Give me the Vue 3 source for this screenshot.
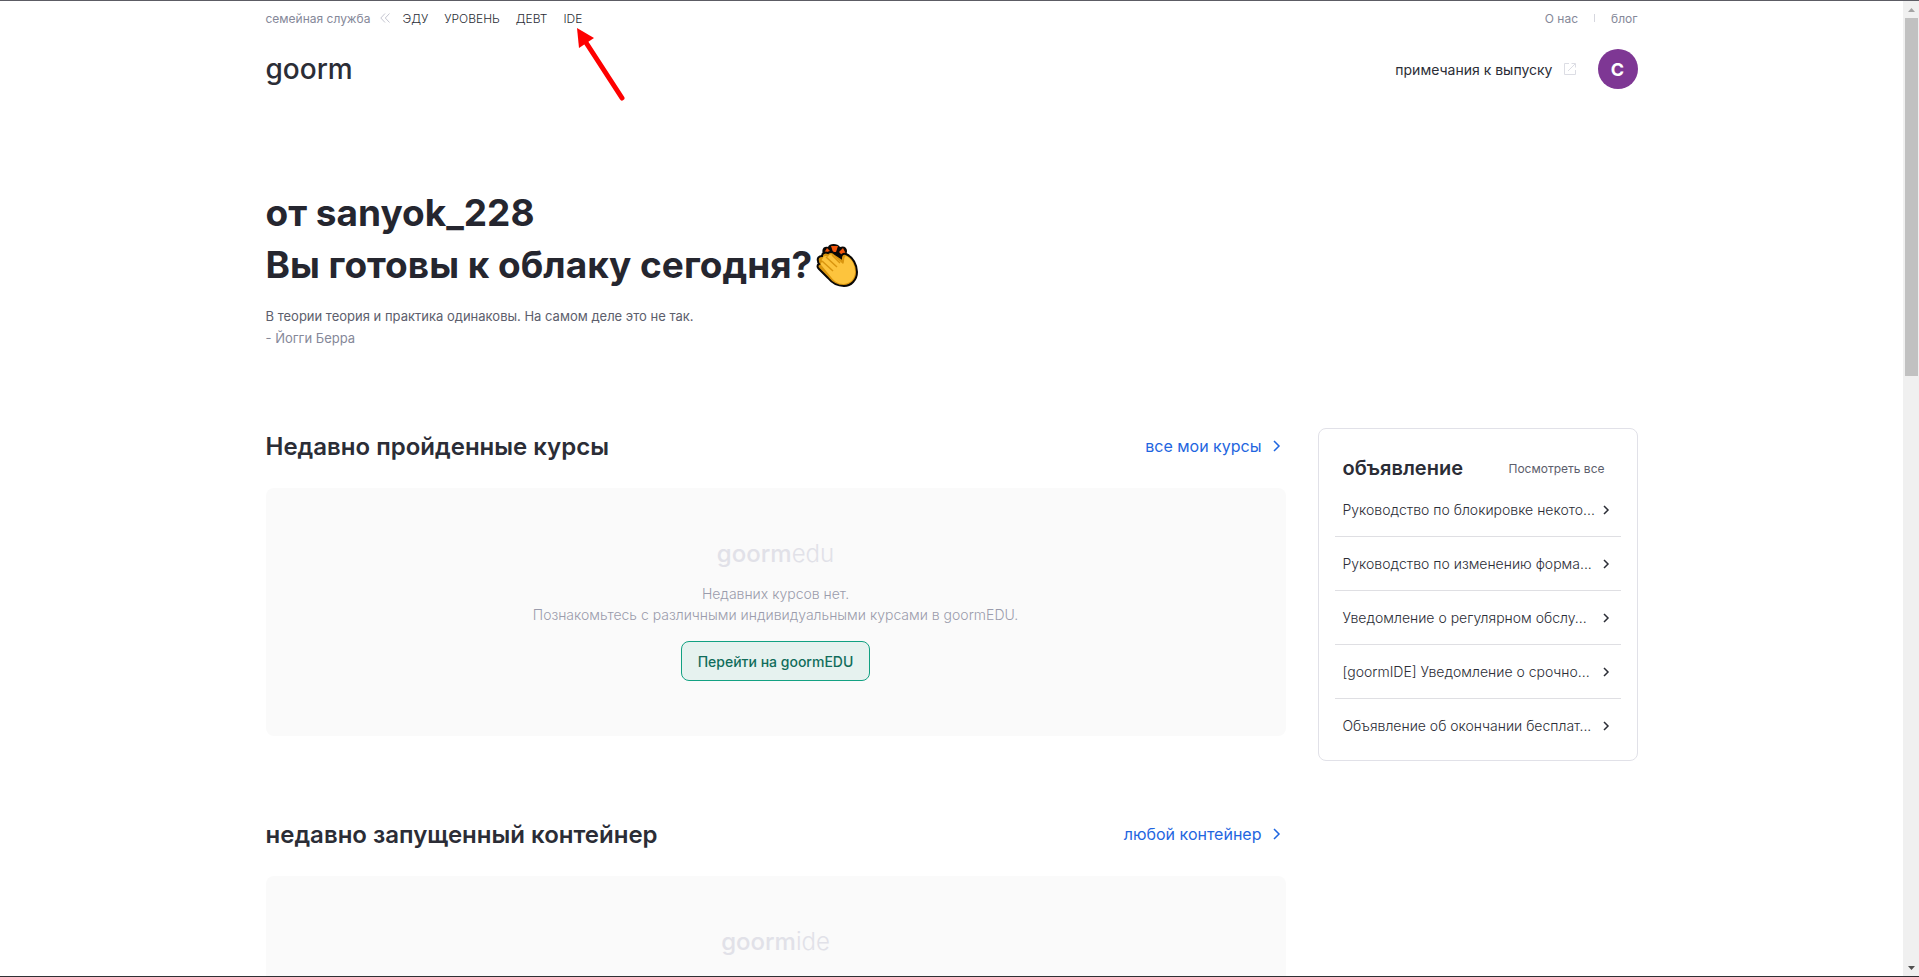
<template>
  <div class="page">
    <div class="container">
      <nav class="family">
        <div class="family-links">
          <span class="muted">семейная служба</span>
          <svg class="double-chevron" viewBox="0 0 10 10" aria-hidden="true">
            <path d="M5 .5 .8 5 5 9.500M9.500 .5 5.300 5l4.200 4.500" />
          </svg>
          <a v-for="item in services" :key="item" href="#" class="service">
            {{ item }}
            <svg v-if="item === 'IDE'" class="arrow" viewBox="0 0 50 76" aria-hidden="true">
              <path class="arrow-line" d="M10 14 47 71" />
              <path class="arrow-head" d="M2 1 19 11 4 21z" />
            </svg>
          </a>
        </div>
        <div class="about-links">
          <a href="#">О нас</a>
          <span class="divider"></span>
          <a href="#">блог</a>
        </div>
      </nav>

      <header class="header">
        <a href="#" class="logo">goorm</a>
        <div class="header-right">
          <a href="#" class="release">
            примечания к выпуску
            <svg viewBox="0 0 12 12" aria-hidden="true">
              <path d="M5 .5H.5v11h11V7M4 8l7-7M7.500 .5h4v4" />
            </svg>
          </a>
          <button type="button" class="avatar">C</button>
        </div>
      </header>

      <section class="hero">
        <h1>
          от sanyok_228<br />
          <span class="hero-line">Вы готовы к облаку сегодня?<svg class="clap" viewBox="0 0 42 44" aria-hidden="true">
            <path class="clap-edge" d="M7 11C5 6 8 3 12 4c1-4 10-4 12 0 5-2 9 2 6 8l-4 6H12z" />
            <path class="clap-spark" d="m8 10 3-5 4 4-3 3zM15 3h7l-2 6h-3zM23 9l4-4 3 6-4 1z" />
            <path class="clap-back" d="M2 18c-1-3 1-5 4-5 0-3 3-4 6-3 2-2 5-1 7 1l6 4c0-3 2-5 5-4 7 3 11 11 11 18 0 8-6 14-13 14-7 0-12-3-16-8L3 26c-2-2-2-4 0-5-1-1-1-2-1-3z" />
            <path class="clap-front" d="M7 15c0-2 3-3 5-1 1-3 4-3 6-1l9 8c2-2 0-6 3-8 6 3 9 9 9 16 0 7-5 12-12 12-5 0-9-3-12-7L6 23c-2-2-1-4 1-4-2-2-1-3 0-4z" />
            <path class="clap-lines" d="m6 18 11 10M10 14l11 10M16 12l8 8" />
          </svg></span>
        </h1>
        <p class="quote">В теории теория и практика одинаковы. На самом деле это не так.</p>
        <p class="quote author">- Йогги Берра</p>
      </section>

      <main class="content">
        <div class="sections">
          <section v-for="s in sections" :key="s.title" class="section">
            <div class="section-head">
              <h2>{{ s.title }}</h2>
              <a href="#" class="more">
                {{ s.more }}
                <svg class="chevron" viewBox="0 0 8 12" aria-hidden="true"><path d="m1 1 5 5-5 5" /></svg>
              </a>
            </div>
            <div class="empty">
              <div class="empty-logo">goorm<span>{{ s.product }}</span></div>
              <template v-if="s.empty">
                <p>{{ s.empty }}<br />{{ s.hint }}</p>
                <button type="button" class="go">{{ s.button }}</button>
              </template>
            </div>
          </section>
        </div>

        <aside class="notice">
          <div class="notice-head">
            <h3>объявление</h3>
            <a href="#">Посмотреть все</a>
          </div>
          <ul>
            <li v-for="n in notices" :key="n">
              <a href="#">
                <span>{{ n }}</span>
                <svg class="chevron" viewBox="0 0 8 12" aria-hidden="true"><path d="m2 2 4 4-4 4" /></svg>
              </a>
            </li>
          </ul>
        </aside>
      </main>
    </div>

    <div class="scrollbar" aria-hidden="true">
      <svg viewBox="0 0 7 4"><path class="up" d="M0 4 3.500 0 7 4z" /></svg>
      <div class="thumb"></div>
      <svg viewBox="0 0 7 4"><path class="down" d="M0 0h7L3.500 4z" /></svg>
    </div>
  </div>
</template>

<script setup>
const services = ['ЭДУ', 'УРОВЕНЬ', 'ДЕВТ', 'IDE']

const sections = [
  {
    title: 'Недавно пройденные курсы',
    more: 'все мои курсы',
    product: 'edu',
    empty: 'Недавних курсов нет.',
    hint: 'Познакомьтесь с различными индивидуальными курсами в goormEDU.',
    button: 'Перейти на goormEDU'
  },
  {
    title: 'недавно запущенный контейнер',
    more: 'любой контейнер',
    product: 'ide'
  }
]

const notices = [
  'Руководство по блокировке некото...',
  'Руководство по изменению форма...',
  'Уведомление о регулярном обслу...',
  '[goormIDE] Уведомление о срочно...',
  'Объявление об окончании бесплат...'
]
</script>

<style>
body {
  margin: 0;
  background: #fff;
}
</style>

<style scoped>
.page {
  position: relative;
  box-sizing: border-box;
  height: 100vh;
  overflow: hidden;
  padding-right: 16px;
  border-top: 1px solid #5c5c64;
  border-bottom: 1px solid #303034;
  font-family: Inter, "Liberation Sans", sans-serif;
  font-size: 14px;
  color: #2b2d36;
}

.container {
  max-width: 1372px;
  margin: 0 auto;
}

a {
  color: inherit;
  text-decoration: none;
}

button {
  font-family: inherit;
  cursor: pointer;
}

h1,
h2,
h3,
p,
ul {
  margin: 0;
  padding: 0;
}

svg {
  flex: none;
  fill: none;
}

/* верхняя строка */
.family {
  display: flex;
  justify-content: space-between;
  height: 34px;
  font-size: 12px;
}

.family-links,
.about-links {
  display: flex;
  align-items: center;
}

.family-links {
  gap: 16px;
  font-weight: 300;
}

.muted,
.about-links {
  color: #858899;
}

.muted {
  font-weight: 400;
}

.double-chevron {
  width: 10px;
  height: 10px;
  margin: 0 -4px 0 -6px;
  stroke: #c4c5d0;
}

.service {
  position: relative;
}

.arrow {
  position: absolute;
  top: 16px;
  left: 12px;
  width: 50px;
  height: 76px;
}

.arrow-line {
  stroke: #fe0000;
  stroke-width: 5;
  stroke-linecap: round;
}

.arrow-head {
  fill: #fe0000;
}

.about-links {
  gap: 16px;
}

.divider {
  width: 1px;
  height: 8px;
  background: #d5d6de;
}

/* шапка */
.header {
  display: flex;
  align-items: center;
  justify-content: space-between;
  height: 68px;
}

.logo {
  font-size: 28px;
  font-weight: 500;
}

.header-right {
  display: flex;
  align-items: center;
  gap: 22px;
}

.release {
  display: flex;
  align-items: center;
  gap: 11px;
}

.release svg {
  width: 12px;
  height: 12px;
  stroke: #dcdde4;
}

.avatar {
  width: 40px;
  height: 40px;
  padding: 0;
  border: 0;
  border-radius: 50%;
  background: #7e3794;
  color: #fff;
  font-size: 18px;
  font-weight: 700;
}

/* приветствие */
.hero {
  padding-top: 84px;
}

.hero h1 {
  font-size: 37px;
  line-height: 52px;
  font-weight: 700;
  color: #25262f;
  margin-bottom: 14px;
}

.hero-line {
  display: flex;
  align-items: center;
  gap: 4px;
}

.clap {
  width: 42px;
  height: 44px;
}

.clap-edge {
  fill: #0a0806;
}

.clap-spark {
  fill: #f2560b;
}

.clap-back {
  fill: #d9950f;
  stroke: #0a0806;
  stroke-width: 2;
}

.clap-front {
  fill: #fdc43d;
}

.clap-lines {
  stroke: #d9950f;
  stroke-width: 1.500;
}

.quote {
  font-size: 13px;
  line-height: 22px;
  color: #5c5e6c;
}

.author {
  color: #858899;
}

/* основная часть */
.content {
  display: flex;
  align-items: flex-start;
  gap: 32px;
  padding-top: 79px;
}

.sections {
  flex: 1;
  min-width: 0;
}

.section {
  margin-bottom: 80px;
}

.section-head {
  display: flex;
  align-items: center;
  justify-content: space-between;
  height: 36px;
  margin-bottom: 24px;
}

.section-head h2 {
  font-size: 24px;
  font-weight: 600;
}

.more {
  display: flex;
  align-items: center;
  gap: 11px;
  padding-right: 5px;
  font-size: 16px;
  color: #1f66e0;
}

.chevron {
  width: 8px;
  height: 12px;
  stroke: currentColor;
  stroke-width: 1.500;
}

.empty {
  box-sizing: border-box;
  height: 248px;
  padding-top: 48px;
  border-radius: 8px;
  background: #fafafa;
  text-align: center;
  font-weight: 300;
  line-height: 21px;
  color: #9a9cac;
}

.empty-logo {
  margin-bottom: 11px;
  font-size: 24px;
  line-height: 36px;
  font-weight: 500;
  color: #e1e1e8;
}

.empty-logo span {
  font-weight: 300;
}

.go {
  height: 40px;
  margin-top: 16px;
  padding: 0 16px;
  border: 1px solid #12a182;
  border-radius: 8px;
  background: #e6f2ef;
  color: #116d5b;
  font-size: 14px;
  font-weight: 500;
}

/* объявления */
.notice {
  box-sizing: border-box;
  width: 320px;
  padding: 24px 16px 8px;
  border: 1px solid #e1e1e8;
  border-radius: 8px;
}

.notice-head {
  display: flex;
  align-items: center;
  justify-content: space-between;
  height: 30px;
  padding: 0 16px 0 8px;
}

.notice-head h3 {
  font-size: 20px;
  font-weight: 600;
}

.notice-head a {
  font-size: 12px;
  color: #5c5e6c;
}

.notice ul {
  list-style: none;
}

.notice li a {
  display: flex;
  align-items: center;
  justify-content: space-between;
  height: 53px;
  padding: 0 11px 0 8px;
  font-weight: 300;
  white-space: nowrap;
}

.notice li + li {
  border-top: 1px solid #dfdfe3;
}

/* полоса прокрутки */
.scrollbar {
  position: absolute;
  top: 0;
  right: 0;
  bottom: 0;
  width: 16px;
  display: flex;
  flex-direction: column;
  align-items: center;
  background: #f0f0f0;
}

.scrollbar svg {
  width: 7px;
  height: 4px;
  margin: 7px 0 6px;
}

.thumb {
  width: 13px;
  height: 358px;
  margin-bottom: auto;
  background: #c1c1c1;
}

.up {
  fill: #a3a3a3;
}

.down {
  fill: #505050;
}
</style>
